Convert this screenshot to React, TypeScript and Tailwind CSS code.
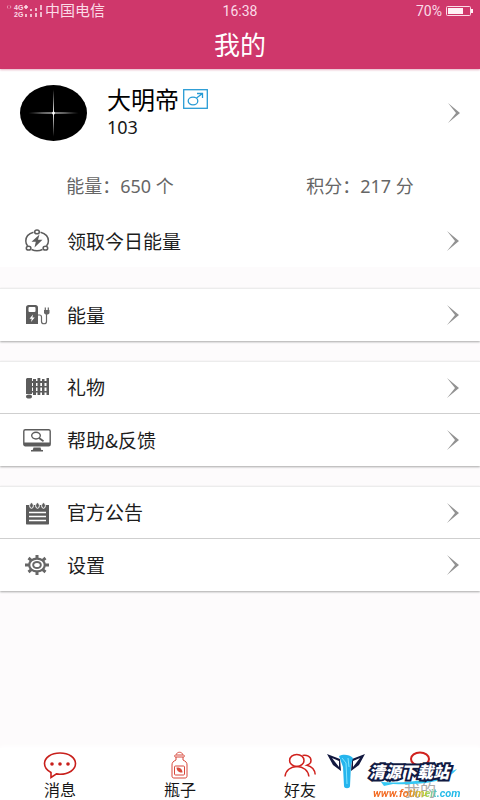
import type { ReactNode } from "react";

const Chevron = () => (
  <svg className="h-5 w-3 shrink-0" viewBox="0 0 12 20" aria-hidden="true">
    <path d="M0 0 L12 10 L0 20 L8 10 Z" fill="#929292" />
  </svg>
);

const EnergyIcon = () => (
  <svg className="h-6 w-7" viewBox="0 0 28 24" fill="none" stroke="#5c5c5c" strokeWidth="1.5" aria-hidden="true">
    <path d="M10.5 3.2C5.8 4.4 2.8 7.800 2.800 12c0 2 .6 3.600 1.800 5" />
    <path d="M17.500 3.200c4.700 1.200 7.900 4.600 7.900 8.800 0 2-.6 3.600-1.900 5" />
    <path d="M8.500 20.500c3.300 1.600 7.700 1.600 11 0" />
    <ellipse cx="14" cy="2.900" rx="2.300" ry="1.900" />
    <ellipse cx="5.600" cy="19.200" rx="2.300" ry="1.900" />
    <ellipse cx="22.400" cy="19.200" rx="2.300" ry="1.900" />
    <path d="M16.500 5.500 L8.500 12.800 H12.800 L11.500 18.500 L19.500 10.800 H15 Z" fill="#5c5c5c" stroke="none" />
  </svg>
);

const PumpIcon = () => (
  <svg className="h-6 w-7" viewBox="0 0 28 24" fill="none" aria-hidden="true">
    <path d="M3 4.500C3 3 4 2 5.500 2h7C14 2 15 3 15 4.500V21H3Z" fill="#5c5c5c" />
    <rect x="5.500" y="4" width="7" height="5" rx="1" fill="#fff" />
    <path d="M10 11.500 L6.500 15.800 H8.700 L8 19 L11.700 14.600 H9.400 Z" fill="#fff" />
    <path d="M15 12h1.500c1.500 0 2 .8 2 2v4.500c0 3 5 3 5 0V11" stroke="#666" strokeWidth="1.200" />
    <path d="M21 7h5.500v2.500c0 1.500-1.200 2-2.700 2s-2.800-.5-2.800-2Z" fill="#666" />
    <path d="M22.300 4.500V7.500M25.300 4.500V7.500" stroke="#666" strokeWidth="1.200" />
  </svg>
);

const GiftIcon = () => (
  <svg className="h-6 w-7" viewBox="0 0 28 24" fill="#5c5c5c" aria-hidden="true">
    <path d="M4 2h5v16H3V3Z" />
    <ellipse cx="6" cy="20.500" rx="3" ry="2" />
    <path d="M10 3h3v16h-3zM14.500 2h2.800v17h-2.800zM19 3h2.500v16H19zM23.500 2H26v17h-2.500z" />
    <path d="M9 5h17v2H9zM9 10h17v1.500H9zM9 15h17v1.500H9z" />
  </svg>
);

const HelpIcon = () => (
  <svg className="h-6 w-7" viewBox="0 0 28 24" fill="none" aria-hidden="true">
    <rect x=".8" y="1.800" width="26.400" height="16" rx="1.500" stroke="#5c5c5c" strokeWidth="1.400" />
    <path d="M1 14.500h26V17c0 .6-.4 1-1 1H2c-.6 0-1-.4-1-1Z" fill="#5c5c5c" />
    <path d="M10.500 19.500h7l.8 2.500H20v1.500H8V22h1.700Z" fill="#5c5c5c" />
    <ellipse cx="13" cy="7.600" rx="4.300" ry="3.400" stroke="#5c5c5c" strokeWidth="1.400" />
    <path d="M16 10 L20.500 13.200" stroke="#5c5c5c" strokeWidth="1.800" />
  </svg>
);

const NoticeIcon = () => (
  <svg className="h-6 w-7" viewBox="0 0 28 24" aria-hidden="true">
    <path d="M3 4h23v18.500c0 .6-.4 1-1 1H4c-.6 0-1-.4-1-1Z" fill="#5c5c5c" />
    <g fill="#5c5c5c" stroke="#fff" strokeWidth="1">
      <ellipse cx="8.500" cy="4.500" rx="1.900" ry="2.800" />
      <ellipse cx="14.500" cy="4.500" rx="1.900" ry="2.800" />
      <ellipse cx="20.500" cy="4.500" rx="1.900" ry="2.800" />
    </g>
    <path d="M6 11.500h17M6 15.500h17M6 19.500h17" stroke="#fff" strokeWidth="1.600" />
  </svg>
);

const GearIcon = () => (
  <svg className="h-6 w-7" viewBox="0 0 28 24" fill="none" stroke="#666" aria-hidden="true">
    <ellipse cx="14" cy="12" rx="7.800" ry="6.400" strokeWidth="2.200" />
    <ellipse cx="14" cy="12" rx="3.800" ry="3" strokeWidth="2" />
    <path
      d="M14 2v3.500M14 18.500V22M2 12h4M22 12h4M5.500 5l2.800 2.300M19.700 16.700L22.500 19M5.500 19l2.800-2.300M19.700 7.300L22.500 5"
      strokeWidth="3"
    />
  </svg>
);

const MessageIcon = () => (
  <svg className="h-7 w-[34px]" viewBox="0 0 34 28" fill="none" aria-hidden="true">
    <path
      d="M8 21.500C4 19.500 1.500 16.400 1.500 12.600 1.500 6.400 8.300 2 17 2s15.500 4.400 15.500 10.600S25.700 23.200 17 23.200c-1.200 0-2.400-.1-3.500-.3L8 26.500Z"
      stroke="#c8201c"
      strokeWidth="1.600"
    />
    <g fill="#c8201c">
      <circle cx="9" cy="13" r="1.800" />
      <circle cx="17" cy="13" r="1.800" />
      <circle cx="25" cy="13" r="1.800" />
    </g>
  </svg>
);

const BottleIcon = () => (
  <svg className="h-7 w-[34px]" viewBox="0 0 34 28" fill="none" stroke="#d8493c" aria-hidden="true">
    <path d="M13.500 3.500c0-3 6-3 6 0M12.500 4h8c1.200 0 1.200 2 0 2h-8c-1.200 0-1.200-2 0-2ZM13 6v3c-3 1.500-4 2.500-4 5v11c0 1.300.7 2 2 2h11c1.300 0 2-.7 2-2V14c0-2.500-1-3.500-4-5V6" />
    <rect x="11.500" y="15" width="10" height="9" rx="1" />
    <path d="M13.500 16.500c3-.5 6 1.500 6 5-3 .5-6-1.500-6-5Z" fill="#d8493c" stroke="none" />
  </svg>
);

const FriendsIcon = () => (
  <svg className="h-7 w-[34px]" viewBox="0 0 34 28" fill="none" stroke="#d0211d" strokeWidth="1.500" aria-hidden="true">
    <ellipse cx="13.800" cy="9.400" rx="7.200" ry="6" />
    <path d="M2 25.500c.6-6 5.500-10 11.900-10s11.400 4 12 10" />
    <path d="M19.500 4.500c4.200-1 8.500 1.200 8.500 5 0 2.400-1.600 4-4 4.800 4.500 1.200 7.800 4.200 8.200 9.200" />
  </svg>
);

const ProfileIcon = () => (
  <svg className="h-7 w-[34px]" viewBox="0 0 34 28" fill="none" stroke="#d0211d" strokeWidth="2" aria-hidden="true">
    <ellipse cx="17" cy="8" rx="9" ry="6.500" />
    <path d="M4 25c.8-6 6-10 13-10s12.200 4 13 10" />
  </svg>
);

const Row = ({ icon, label }: { icon: ReactNode; label: string }) => (
  <button type="button" className="flex h-[52px] w-full items-center bg-white pr-[21px] pl-[23px] text-left text-[19px] text-[#1d1d1d]">
    {icon}
    <span className="ml-4 grow">{label}</span>
    <Chevron />
  </button>
);

const Section = ({ children }: { children: ReactNode }) => (
  <section className="mb-5 divide-y divide-[#cfcfcf] border-t border-[#ececec] bg-white shadow-[0_1px_2px_#a8a8a8]">
    {children}
  </section>
);

const Tab = ({ icon, label, muted = false }: { icon: ReactNode; label: string; muted?: boolean }) => (
  <button
    type="button"
    className={`flex flex-col items-center text-[16px] leading-5 ${muted ? "text-[#aaa]" : "text-[#171717]"}`}
  >
    {icon}
    <span>{label}</span>
  </button>
);

const Watermark = () => (
  <div className="pointer-events-none absolute right-[19px] bottom-0 flex h-[50px] items-start gap-1">
    <svg className="h-10 w-[38px]" viewBox="0 0 38 40" aria-hidden="true">
      <path d="M0 4 L13 9 L14 21 L6 15 Z M38 4 L25 9 L24 21 L32 15 Z" fill="#12183f" />
      <path d="M5 8 L12 11 V17 Z M33 8 L26 11 V17 Z" fill="#fff" />
      <path d="M12 6c4-2 10-2 14 2l-2 7-1 21c0 3-6 3-6 0l-1-19Z" fill="#25b5ed" />
      <path d="M15 8l4 5 1 21M21 8l1 9" stroke="#80e4ff" fill="none" />
    </svg>
    <div className="relative h-full w-[92px]">
      <svg className="absolute top-4 left-3 h-5 w-[78px]" viewBox="0 0 78 20" aria-hidden="true">
        <path d="M0 16 C30 18 54 13 76 3 C66 16 42 19 12 18 L3 20Z" fill="#35c8f4" />
      </svg>
      <div className="relative text-[16px] leading-[42px] font-black whitespace-nowrap text-white italic [paint-order:stroke_fill] [-webkit-text-stroke:4px_#101a43]">
        清源下载站
      </div>
      <div className="absolute bottom-0 left-1 bg-linear-to-r from-[#f36b22] from-35% via-[#b8d52c] via-60% to-[#20b9e8] to-75% bg-clip-text font-[Roboto,sans-serif] text-[11px] leading-3 font-bold text-transparent italic">
        www.fotimeit.com
      </div>
    </div>
  </div>
);

export default function App() {
  return (
    <div className="flex min-h-screen flex-col bg-[#fdfbfc] font-['Noto_Sans_CJK_SC',sans-serif]">
      <header className="relative z-10 bg-[#cf376b] text-white shadow-[0_1px_2px_#e5b5c5]">
        <div className="grid h-5 grid-cols-3 items-center px-[7px] font-[Roboto,'Noto_Sans_CJK_SC',sans-serif] text-[14px] text-[#fbdbe7]">
          <div className="flex items-center">
            <svg className="h-4 w-[38px]" viewBox="0 0 38 16" aria-hidden="true">
              <path d="M1 2.500L0 4l1 1.500M3 2.500L4 4 3 5.500" fill="none" stroke="#e996b3" />
              <g fill="#fbdbe7" fontFamily="Liberation Sans, sans-serif" fontSize="7" fontWeight="700">
                <text x="7" y="7">4G</text>
                <text x="7" y="14">2G</text>
              </g>
              <path d="M19 2v4M17 4h4M19 11v3M24 6v2M24 11v3M29 5v3M29 10v4M34 2v5M34 9v5" stroke="#fbdbe7" strokeWidth="1.600" />
            </svg>
            <span className="text-[15px]">中国电信</span>
          </div>
          <time className="text-center">16:38</time>
          <div className="flex items-center justify-end gap-1">
            <span>70%</span>
            <svg className="h-[10px] w-[27px]" viewBox="0 0 27 10" aria-hidden="true">
              <rect x=".5" y=".5" width="24" height="9" rx="1" fill="none" stroke="#fbdbe7" />
              <path d="M2 2h15v6H2zM25 3h2v4h-2z" fill="#fff0f5" />
            </svg>
          </div>
        </div>
        <h1 className="h-[49px] text-center text-[26px] leading-[48px]">我的</h1>
      </header>

      <main>
        <section className="mb-[21px] bg-white">
          <button type="button" className="flex h-[88px] w-full items-center px-5 text-left">
            <svg className="h-14 w-[67px]" viewBox="0 0 67 56" role="img" aria-label="头像">
              <defs>
                <radialGradient id="flare">
                  <stop stopColor="#fff" />
                  <stop offset=".3" stopColor="#aaa" />
                  <stop offset="1" stopColor="#000" />
                </radialGradient>
              </defs>
              <ellipse cx="33.500" cy="28" rx="33.500" ry="28" />
              <ellipse cx="33.500" cy="28" rx="29" ry="1" fill="url(#flare)" />
              <ellipse cx="33.500" cy="28" rx="1" ry="24" fill="url(#flare)" />
              <circle cx="33.500" cy="28" r="1.500" fill="#fff" />
            </svg>
            <span className="mb-1 ml-5 flex grow flex-col text-[#171717]">
              <span className="flex items-center gap-1 text-[24px] leading-8 text-black">
                大明帝
                <svg className="h-5 w-[25px]" viewBox="0 0 25 20" fill="none" stroke="#279bd5" strokeWidth="1.300" role="img" aria-label="男">
                  <rect x=".7" y=".7" width="23.600" height="18.600" />
                  <ellipse cx="10" cy="12" rx="4.800" ry="3.900" />
                  <path d="M13.500 9L19.500 4.500M14 4.500h5.500V9" />
                </svg>
              </span>
              <span className="font-['Noto_Sans',sans-serif] text-[18px] leading-6">103</span>
            </span>
            <Chevron />
          </button>
          <div className="grid h-[58px] grid-cols-2 items-center text-center font-['Noto_Sans','Noto_Sans_CJK_SC',sans-serif] text-[18px] text-[#666]">
            <span>能量：650 个</span>
            <span>积分：217 分</span>
          </div>
          <Row icon={<EnergyIcon />} label="领取今日能量" />
        </section>
        <Section>
          <Row icon={<PumpIcon />} label="能量" />
        </Section>
        <Section>
          <Row icon={<GiftIcon />} label="礼物" />
          <Row icon={<HelpIcon />} label="帮助&反馈" />
        </Section>
        <Section>
          <Row icon={<NoticeIcon />} label="官方公告" />
          <Row icon={<GearIcon />} label="设置" />
        </Section>
      </main>

      <nav className="relative mt-auto grid h-[52px] grid-cols-4 items-start bg-white pt-[3px] shadow-[0_-2px_4px_#fff]">
        <Tab icon={<MessageIcon />} label="消息" />
        <Tab icon={<BottleIcon />} label="瓶子" />
        <Tab icon={<FriendsIcon />} label="好友" />
        <Tab icon={<ProfileIcon />} label="我的" muted />
        <Watermark />
      </nav>
    </div>
  );
}
